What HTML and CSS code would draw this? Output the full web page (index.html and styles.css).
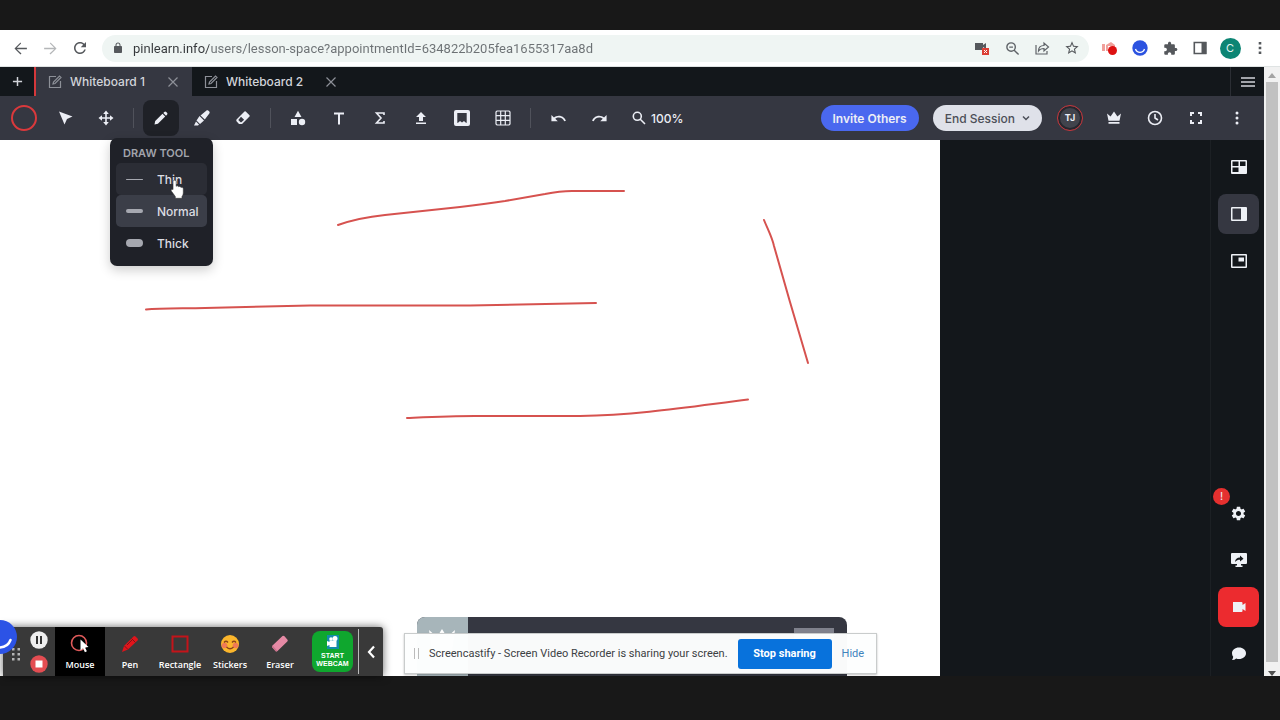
FILE: index.html
```html
<!DOCTYPE html>
<html lang="en">
<head>
	<meta charset="utf-8">
	<title>Lesson Space</title>
	<link rel="stylesheet" href="styles.css">
</head>
<body>

	<!-- Browser bar -->

	<header class="browser">
		<button class="nav" aria-label="Back"><svg width="17" height="17" viewBox="0 0 24 24"><path d="M21 11H6.800l6-6L12 3.600 3.500 12l8.500 8.400 1.400-1.400L6.800 13H21z"/></svg></button>
		<button class="nav faded" aria-label="Forward"><svg width="17" height="17" viewBox="0 0 24 24"><path d="M3 11h14.200l-6-6L12 3.600 20.500 12 12 20.400 10.600 19l6.600-6H3z"/></svg></button>
		<button class="nav" aria-label="Reload"><svg width="18" height="18" viewBox="0 0 24 24"><path d="M17.65 6.35C16.2 4.9 14.21 4 12 4c-4.42 0-7.99 3.58-7.99 8s3.57 8 7.99 8c3.73 0 6.84-2.55 7.73-6h-2.08c-.82 2.33-3.04 4-5.65 4-3.31 0-6-2.69-6-6s2.69-6 6-6c1.66 0 3.14.69 4.22 1.78L13 11h7V4l-2.35 2.35z"/></svg></button>
		<div class="omnibox">
			<svg width="12" height="12" viewBox="0 0 24 24"><path d="M18 8h-1V6c0-2.760-2.240-5-5-5S7 3.240 7 6v2H6c-1.100 0-2 .9-2 2v10c0 1.100.9 2 2 2h12c1.100 0 2-.9 2-2V10c0-1.100-.9-2-2-2zM9 8V6c0-1.660 1.340-3 3-3s3 1.340 3 3v2z"/></svg>
			<input class="url" type="text" aria-label="Address" value="pinlearn.info/users/lesson-space?appointmentId=634822b205fea1655317aa8d">
			<button class="nav" aria-label="Camera blocked"><svg width="16" height="16" viewBox="0 0 16 16"><path d="M1 3h8v2l3-2v6l-3-2v3H1z"/><path fill="#dc3f35" d="M8 8h7v7H8z"/><path fill="none" stroke="#fff" d="M10 10l3 3m0-3l-3 3"/></svg></button>
			<button class="nav" aria-label="Zoom"><svg width="15" height="15" viewBox="0 0 16 16"><path fill="none" stroke="#5f6368" stroke-width="1.500" d="M11 6.500a4.500 4.500 0 1 1-9 0a4.500 4.500 0 0 1 9 0zM9.800 9.800L14.500 14.500M4.500 6.500h4"/></svg></button>
			<button class="nav" aria-label="Share"><svg width="16" height="16" viewBox="0 0 16 16"><path fill="none" stroke="#5f6368" stroke-width="1.200" d="M2 5v9h11v-3M4.500 11c0-3.500 2-5.500 5.500-5.500V3l4.500 4-4.500 4V8.500C7 8.500 5.500 9.500 4.500 11z"/></svg></button>
			<button class="nav" aria-label="Bookmark"><svg width="16" height="16" viewBox="0 0 24 24"><path d="M22 9.240l-7.190-.62L12 2 9.190 8.630 2 9.240l5.460 4.730L5.820 21 12 17.270 18.180 21l-1.630-7.030L22 9.240zM12 15.400l-3.760 2.270 1-4.280-3.320-2.880 4.380-.38L12 6.100l1.710 4.040 4.380.38-3.320 2.880 1 4.280L12 15.400z"/></svg></button>
		</div>
		<button class="nav" aria-label="Screencastify"><svg width="18" height="18" viewBox="0 0 18 18"><path fill="#f0a09b" d="M1 5h3v7H1zM5 6l5-3 4 3v6H5z"/><path fill="#fff" d="M7 7h4v3H7z"/><circle cx="11.500" cy="11.500" r="4.500" fill="#dd1111"/></svg></button>
		<button class="nav" aria-label="Loom"><svg width="16" height="16" viewBox="0 0 16 16"><circle cx="8" cy="8" r="7.700" fill="#2c53e0"/><path fill="none" stroke="#fff" stroke-width="1.300" d="M3.500 9c1.500 4.500 7.500 4.500 9 0"/></svg></button>
		<button class="nav" aria-label="Extensions"><svg width="15" height="15" viewBox="0 0 24 24"><path d="M20.500 11H19V7c0-1.100-.9-2-2-2h-4V3.500C13 2.120 11.880 1 10.500 1S8 2.120 8 3.500V5H4c-1.100 0-1.990.9-1.990 2v3.800H3.500c1.490 0 2.700 1.210 2.700 2.700s-1.210 2.700-2.700 2.700H2V20c0 1.100.9 2 2 2h3.800v-1.500c0-1.490 1.210-2.700 2.700-2.700 1.490 0 2.700 1.210 2.700 2.700V22H17c1.100 0 2-.9 2-2v-4h1.500c1.380 0 2.500-1.120 2.500-2.500S21.880 11 20.500 11z"/></svg></button>
		<button class="nav" aria-label="Side panel"><svg width="14" height="14" viewBox="0 0 14 14"><path fill="none" stroke="#55585c" stroke-width="1.600" d="M1.300 1.500h11.400v11H1.300z"/><path d="M8.500 1h5v12h-5z"/></svg></button>
		<button class="nav" aria-label="Profile"><span class="profile">C</span></button>
		<button class="nav" aria-label="Menu"><svg width="16" height="16" viewBox="0 0 16 16"><path d="M6.700 2h2.600v2.600H6.700zM6.700 6.700h2.600v2.600H6.700zM6.700 11.400h2.600V14H6.700z"/></svg></button>
	</header>

	<div class="viewport">
		<main class="app">

			<!-- Whiteboard tabs -->

			<nav class="tabs">
				<button class="add" aria-label="Add tab"><svg width="11" height="11" viewBox="0 0 12 12"><path class="line" d="M6 1v10M1 6h10"/></svg></button>
				<div class="tab active">
					<svg width="14" height="14" viewBox="0 0 14 14"><path class="line thin" d="M8 1.500H1.500v11h11V6M5 9l.5-2L11.500 1l1.500 1.500-6 6z"/></svg>
					<a href="#board1">Whiteboard 1</a>
					<button class="close" aria-label="Close Whiteboard 1"><svg width="12" height="12" viewBox="0 0 12 12"><path class="line thin" d="M1.500 1.500l9 9m0-9l-9 9"/></svg></button>
				</div>
				<div class="tab">
					<svg width="14" height="14" viewBox="0 0 14 14"><path class="line thin" d="M8 1.500H1.500v11h11V6M5 9l.5-2L11.500 1l1.500 1.500-6 6z"/></svg>
					<a href="#board2">Whiteboard 2</a>
					<button class="close" aria-label="Close Whiteboard 2"><svg width="12" height="12" viewBox="0 0 12 12"><path class="line thin" d="M1.500 1.500l9 9m0-9l-9 9"/></svg></button>
				</div>
				<button class="list" aria-label="All tabs"><svg width="14" height="12" viewBox="0 0 14 12"><path class="line" d="M0 2h14M0 6h14M0 10h14"/></svg></button>
			</nav>

			<!-- Toolbar -->

			<div class="toolbar">
				<button class="tool" aria-label="Colour"><span class="ring"></span></button>
				<button class="tool" aria-label="Select"><svg width="16" height="16" viewBox="0 0 16 16"><path d="M2 1.500L15.500 6.500 10 9 7.500 14.500z"/></svg></button>
				<button class="tool" aria-label="Move"><svg width="16" height="16" viewBox="0 0 16 16"><path class="line" d="M8 3v10M3 8h10"/><path d="M8 .5L10.800 4H5.200zM8 15.500L5.200 12h5.600zM.5 8L4 5.200v5.600zM15.500 8L12 10.800V5.200z"/></svg></button>
				<span class="divider"></span>
				<div class="draw">
					<button class="tool on" aria-label="Draw"><svg width="16" height="16" viewBox="0 0 16 16"><path d="M1.500 14.500l.7-3.400 7.300-7.300 2.700 2.700-7.300 7.300zM10.300 3l1-1a1.300 1.300 0 0 1 1.900 0l.8.800a1.300 1.300 0 0 1 0 1.900l-1 1z"/></svg></button>
					<div class="menu">
						<h2>DRAW TOOL</h2>
						<button class="size hover"><span class="stroke one"></span>Thin</button>
						<button class="size picked"><span class="stroke two"></span>Normal</button>
						<button class="size"><span class="stroke three"></span>Thick</button>
						<svg class="hand" width="16" height="20" viewBox="0 0 16 20"><path fill="#fff" stroke="#333" stroke-width=".6" d="M4.500 1.200c1.100 0 1.700.6 1.700 1.600v4.500c.8-.8 2-.5 2.400.4 1-.6 2-.2 2.400.7 1.200-.4 2.300.2 2.300 1.500v3.600c0 2-.6 3.200-1.300 4v1.800H5.300v-1.800L1.500 12.300c-1-1.400.3-2.600 1.500-1.700V2.800c0-1 .6-1.600 1.500-1.600z"/></svg>
					</div>
				</div>
				<button class="tool" aria-label="Highlighter"><svg width="18" height="18" viewBox="0 0 18 18"><path d="M1 16.500l2-4 3 3-1 1zM3.500 11.500l3-4.500 4.500 4.500L7 15zM7.500 6.500l6-5c1.200-1 4 1.500 3 2.800L11.800 10.500z"/></svg></button>
				<button class="tool" aria-label="Eraser"><svg width="16" height="16" viewBox="0 0 16 16"><path fill-rule="evenodd" d="M9.500 1.500Q10 1 10.700 1.500L14.500 5.300Q15 6 14.500 6.500L7 14H4L1.500 11.200Q1 10.500 1.500 9.500zM6 6.800L3.300 9.900 5.600 12.300H6.400L9.100 9.700z"/></svg></button>
				<span class="divider"></span>
				<button class="tool" aria-label="Shapes"><svg width="16" height="16" viewBox="0 0 16 16"><path d="M8 .8L11.500 7h-7zM1 9h6v6H1z"/><circle cx="12" cy="12" r="3.200"/></svg></button>
				<button class="tool" aria-label="Text"><svg width="14" height="14" viewBox="0 0 14 14"><path d="M2 1.500h10v2H8v10H6v-10H2z"/></svg></button>
				<button class="tool" aria-label="Formula"><svg width="14" height="14" viewBox="0 0 14 14"><path class="line" d="M11 4V2H3.500L8 7l-4.500 5H11v-2"/></svg></button>
				<button class="tool" aria-label="Upload"><svg width="14" height="14" viewBox="0 0 14 14"><path d="M7 1l5 5H9v4H5V6H2zM2 11.500h10v1.500H2z"/></svg></button>
				<button class="tool" aria-label="Stickers"><svg width="16" height="16" viewBox="0 0 16 16"><path fill-rule="evenodd" d="M2 0h12a2 2 0 0 1 2 2v12a2 2 0 0 1-2 2H2a2 2 0 0 1-2-2V2a2 2 0 0 1 2-2zM3.300 3v10q1.500-.5 2.700-2l2 1.500 2-1.500q1.200 1.500 2.700 2V3z"/></svg></button>
				<button class="tool" aria-label="Grid"><svg width="16" height="16" viewBox="0 0 16 16"><path class="line thin" d="M2 1h12l1 1v12l-1 1H2l-1-1V2zM5.700 1v14M10.300 1v14M1 5.700h14M1 10.300h14"/></svg></button>
				<span class="divider"></span>
				<button class="tool" aria-label="Undo"><svg width="17" height="17" viewBox="0 0 24 24"><path d="M12.500 8c-2.650 0-5.050.99-6.900 2.600L2 7v9h9l-3.620-3.620c1.390-1.160 3.160-1.880 5.120-1.880 3.540 0 6.550 2.310 7.600 5.500l2.370-.78C21.080 11.030 17.150 8 12.500 8z"/></svg></button>
				<button class="tool" aria-label="Redo"><svg width="17" height="17" viewBox="0 0 24 24"><path d="M11.500 8c2.650 0 5.050.99 6.900 2.600L22 7v9h-9l3.620-3.620c-1.390-1.160-3.160-1.880-5.120-1.880-3.540 0-6.550 2.310-7.600 5.500l-2.370-.78C2.920 11.030 6.850 8 11.500 8z"/></svg></button>
				<button class="zoom"><svg width="14" height="14" viewBox="0 0 14 14"><path class="line" d="M9.300 5.300a4 4 0 1 1-8 0a4 4 0 0 1 8 0zM8.300 8.300L13 13"/></svg>100%</button>

				<button class="pill invite">Invite Others</button>
				<button class="pill end">End Session<svg width="8" height="6" viewBox="0 0 8 6"><path fill="none" stroke="#4c4f58" stroke-width="1.500" d="M1 1.500l3 3 3-3"/></svg></button>
				<span class="avatar">TJ</span>
				<button class="tool" aria-label="Leader"><svg width="14" height="14" viewBox="0 0 14 14"><path d="M0 2.500l3.600 3L7 .5l3.400 5 3.600-3L12.500 9.800h-11zM1.500 11h11v1.800h-11z"/></svg></button>
				<button class="tool" aria-label="Timer"><svg width="16" height="16" viewBox="0 0 16 16"><circle class="line" cx="8" cy="8" r="6.500"/><path class="line" d="M8 4v4l3 2"/></svg></button>
				<button class="tool" aria-label="Full screen"><svg width="12" height="12" viewBox="0 0 12 12"><path class="line wide" d="M1 4V1h3M8 1h3v3M11 8v3H8M4 11H1V8"/></svg></button>
				<button class="tool" aria-label="More"><svg width="4" height="14" viewBox="0 0 4 14"><circle cx="2" cy="2" r="1.500"/><circle cx="2" cy="7" r="1.500"/><circle cx="2" cy="12" r="1.500"/></svg></button>
			</div>

			<div class="stage">
				<section class="board">
					<svg class="ink" width="940" height="300" viewBox="0 0 940 300">
						<path d="M338 85C352 80 366 77 385 75L460 67Q485 64 505 61L545 54Q560 51 572 51H624"/>
						<path d="M146 169.500C160 168 180 168.500 205 168L310 165.500H470L596 163"/>
						<path d="M764 80C768 90 772 97 774 106L790 162 808 223"/>
						<path d="M407 278C430 277 450 276 475 276H580C640 275 695 266 748 259.500"/>
					</svg>
				</section>
				<aside class="people"></aside>
				<aside class="rail">
					<button aria-label="Grid view"><svg width="16" height="14" viewBox="0 0 16 14"><rect width="16" height="14" rx="1"/><path fill="#13171b" d="M1.500 1.500h6v4.500h-6zM9 1.500h5.500v4.500H9zM1.500 7.500h6v4.500h-6z"/></svg></button>
					<button class="on" aria-label="Sidebar view"><svg width="16" height="14" viewBox="0 0 16 14"><rect width="16" height="14" rx="1"/><path fill="#353741" d="M1.500 1.500H10v11H1.500z"/></svg></button>
					<button aria-label="Corner view"><svg width="16" height="14" viewBox="0 0 16 14"><rect width="16" height="14" rx="1"/><path fill="#13171b" d="M1.500 1.500h13v11h-13z"/><path d="M7.500 3.500H13v4H7.500z"/></svg></button>
					<button class="first" aria-label="Settings"><span class="alert">!</span><svg width="17" height="17" viewBox="0 0 24 24"><path d="M19.140 12.940c.04-.3.06-.61.06-.94 0-.32-.02-.64-.07-.94l2.030-1.580c.18-.14.23-.41.12-.61l-1.920-3.320c-.12-.22-.37-.29-.59-.22l-2.390.96c-.5-.38-1.030-.7-1.620-.94l-.36-2.540c-.04-.24-.24-.41-.48-.41h-3.840c-.24 0-.43.17-.47.41l-.36 2.540c-.59.24-1.130.57-1.620.94l-2.390-.96c-.22-.08-.47 0-.59.22L2.740 8.870c-.12.21-.08.47.12.61l2.030 1.580c-.05.3-.09.63-.09.94s.02.64.07.94l-2.030 1.580c-.18.14-.23.41-.12.61l1.920 3.320c.12.22.37.29.59.22l2.390-.96c.5.38 1.030.7 1.620.94l.36 2.540c.05.24.24.41.48.41h3.840c.24 0 .44-.17.47-.41l.36-2.540c.59-.24 1.130-.56 1.620-.94l2.390.96c.22.08.47 0 .59-.22l1.920-3.320c.12-.22.07-.47-.12-.61zM12 15.600c-1.980 0-3.600-1.620-3.600-3.600s1.620-3.600 3.600-3.600 3.600 1.620 3.600 3.600-1.620 3.600-3.600 3.600z"/></svg></button>
					<button aria-label="Share screen"><svg width="16" height="16" viewBox="0 0 16 16"><path d="M1 1h14a1 1 0 0 1 1 1v9a1 1 0 0 1-1 1h-5v1.500h1.500V15h-7v-1.500H6V12H1a1 1 0 0 1-1-1V2a1 1 0 0 1 1-1z"/><path fill="#13171b" d="M4 10c.3-3 2-4.500 5-4.500V3.500L12.500 6.700 9 9.500V7.800c-2 0-3.500.5-5 2.200z"/></svg></button>
					<button class="camera" aria-label="Camera"><svg width="14" height="12" viewBox="0 0 14 12"><path d="M1 1h8.500a1 1 0 0 1 1 1v2L13.500 2v8l-3-2v2a1 1 0 0 1-1 1H1z"/></svg></button>
					<button aria-label="Chat"><svg width="16" height="14" viewBox="0 0 16 14"><path d="M8 .5c4 0 7 2.500 7 5.700S12 12 8 12q-1.500 0-2.800-.5Q3.500 13 1 13q1-1.500 1.200-3.200Q1 8.300 1 6.200C1 3 4 .5 8 .5z"/></svg></button>
				</aside>
			</div>
		</main>

		<div class="scrollbar">
			<svg width="8" height="5" viewBox="0 0 8 5"><path fill="#a3a3a3" d="M4 0l4 5H0z"/></svg>
			<span class="thumb"></span>
			<svg width="8" height="5" viewBox="0 0 8 5"><path fill="#505050" d="M0 0h8L4 5z"/></svg>
		</div>

		<!-- Panels floating over the page -->

		<div class="notice">
			<div class="crown"><svg width="26" height="22" viewBox="0 0 26 22"><path fill="#fff" d="M0 1l8 7 5-8 5 8 8-7-3 20H3z"/></svg></div>
			<span class="chip"></span>
		</div>

		<div class="recorder">
			<svg class="grip" width="8" height="13" viewBox="0 0 8 13"><path d="M0 0h2.500v2.500H0zM5.500 0H8v2.500H5.500zM0 5h2.500v2.500H0zM5.500 5H8v2.500H5.500zM0 10h2.500v2.500H0zM5.500 10H8v2.500H5.500z"/></svg>
			<div class="controls">
				<button aria-label="Pause"><svg width="18" height="18" viewBox="0 0 18 18"><circle cx="9" cy="9" r="8.700" fill="#eee"/><path fill="#333" d="M6 5h2v8H6zM10 5h2v8h-2z"/></svg></button>
				<button aria-label="Stop"><svg width="18" height="18" viewBox="0 0 18 18"><circle cx="9" cy="9" r="8.700" fill="#e34d52"/><path fill="#fff" d="M5.500 5.500h7v7h-7z"/></svg></button>
			</div>
			<button class="item current"><svg width="20" height="20" viewBox="0 0 20 20"><circle cx="9" cy="9" r="7.500" fill="none" stroke="#e05a5a" stroke-width="1.600"/><path fill="#fff" d="M10.500 5.500v11l2.600-2.300 1.800 4 2-.9-1.900-3.900 3.500-.3z"/></svg>Mouse</button>
			<button class="item"><svg width="20" height="20" viewBox="0 0 20 20"><path fill="#e0141b" d="M2 18l2-6L13.500 2.500q1-1 2 0l2 2q1 1 0 2L8 15.500z"/><path fill="none" stroke="#7c1518" d="M11.500 4.500l4 4M4.500 12l3.500 3.500M7 11l5-5"/></svg>Pen</button>
			<button class="item"><svg width="20" height="20" viewBox="0 0 20 20"><path fill="none" stroke="#c4141a" stroke-width="2" d="M2.500 2.500h15v15h-15z"/></svg>Rectangle</button>
			<button class="item"><svg width="20" height="20" viewBox="0 0 20 20"><circle cx="10" cy="10" r="9" fill="#fbb62c"/><circle cx="4.500" cy="11.500" r="2.800" fill="#f07a55"/><circle cx="15.500" cy="11.500" r="2.800" fill="#f07a55"/><path fill="none" stroke="#8a431c" stroke-width="1.300" d="M4 8.500q2-2.500 4 0M12 8.500q2-2.500 4 0M6.500 13q3.500 3.500 7 0"/></svg>Stickers</button>
			<button class="item"><svg width="20" height="20" viewBox="0 0 20 20"><path fill="#e58aa5" d="M2.500 11.500L12.500 2q1-.7 2 .2l3 3.500q.7 1-.2 1.800L7.500 17q-1.500 1-2.500-.5L2.300 13.500q-.7-1 .2-2z"/><path fill="#c9708b" d="M2.500 11.500l5 5.500q-1.500 1-2.500-.5l-2.700-3q-.7-1 .2-2z"/></svg>Eraser</button>
			<button class="webcam"><svg width="14" height="14" viewBox="0 0 14 14"><path fill="#148ca8" d="M1 0h12v14H1z"/><path fill="#fff" d="M1 6l2.500 1V5.500h7V12h-7v-2L1 11z"/><circle cx="5" cy="4" r="1.800" fill="#fff"/><circle cx="9" cy="3.500" r="2.500" fill="#fff"/></svg><span>START</span><span>WEBCAM</span></button>
			<button class="fold" aria-label="Collapse"><svg width="8" height="14" viewBox="0 0 8 14"><path fill="none" stroke="#fff" stroke-width="2.200" d="M7 1.500L2 7l5 5.500"/></svg></button>
		</div>

		<svg class="loom" width="18" height="36" viewBox="0 0 18 36"><circle cx="0" cy="18" r="17" fill="#2c53e6"/><path fill="none" stroke="#fff" stroke-width="2.500" stroke-linecap="round" d="M0 28.500Q8 28 10.500 21"/></svg>

		<div class="sharing">
			<span class="handle"></span>
			<p>Screencastify - Screen Video Recorder is sharing your screen.</p>
			<button>Stop sharing</button>
			<a href="#hide">Hide</a>
		</div>
	</div>

</body>
</html>
```
FILE: styles.css
```css
* { box-sizing: border-box; }
html, body { height: 100%; margin: 0; }
body { display: flex; flex-direction: column; padding: 30px 0 44px; background: #181818; font-family: Inter, "Liberation Sans", sans-serif; overflow: hidden; }
button { display: flex; align-items: center; justify-content: center; flex: none; margin: 0; padding: 0; border: 0; background: none; color: inherit; font: inherit; white-space: nowrap; }
a { color: inherit; text-decoration: none; }
svg { display: block; flex: none; fill: currentColor; }
.line { fill: none; stroke: currentColor; stroke-width: 1.6; }
.thin { stroke-width: 1.2; }
.wide { stroke-width: 2; }

/* Browser bar */

.browser { display: flex; align-items: center; flex: none; height: 37px; padding: 0 5px; background: #fff; color: #55585c; border-bottom: 1px solid #dfe3e3; }
.nav { width: 30px; height: 26px; }
.faded { color: #b4b6b8; }
.omnibox { display: flex; align-items: center; flex: 1; height: 27px; margin: 0 6px 0 7px; padding: 0 2px 0 10px; border-radius: 14px; background: #eff5f3; }
.url { flex: 1; min-width: 0; margin-left: 9px; padding: 1px 0 0; border: 0; outline: 0; font: 13px/20px Roboto, sans-serif; color: transparent; background: linear-gradient(90deg, #35383b 76px, #6c7174 76px); -webkit-background-clip: text; background-clip: text; }
.profile { width: 21px; height: 21px; border-radius: 50%; background: #0d8574; color: #e6f4f1; font-size: 11px; line-height: 21px; }

/* Page */

.viewport { position: relative; display: flex; flex: 1; min-height: 0; }
.app { display: flex; flex-direction: column; flex: 1; min-width: 0; background: #13171b; }
.scrollbar { display: flex; flex-direction: column; align-items: center; justify-content: space-between; width: 16px; padding: 6px 0 0; background: #f1f1f1; }
.thumb { flex: 1; width: 12px; margin: 4px 0 9px; background: #c1c1c1; }

/* Tabs */

.tabs { display: flex; flex: none; height: 29px; color: #d2d4da; font-size: 12px; font-weight: 500; }
.add { width: 34px; }
.tab { display: flex; align-items: center; padding: 0 13px 0 12px; }
.tab > svg, .close { color: #8d9098; }
.tab a { margin: 0 22px 0 8px; white-space: nowrap; }
.tab.active { border-left: 2px solid #d5383b; background: #353741; }
.list { width: 34px; margin-left: auto; border-left: 1px solid #2b2e34; }

/* Toolbar */

.toolbar { display: flex; align-items: center; gap: 5px; flex: none; height: 44px; padding: 0 9px 0 6px; background: #353741; color: #eceef5; }
.tool { width: 36px; height: 36px; border-radius: 8px; }
.tool.on { background: #1f2127; }
.ring { width: 26px; height: 26px; border: 2px solid #da393c; border-radius: 50%; }
.divider { width: 1px; height: 20px; margin: 0 4px; background: #50525b; }
.zoom { gap: 5px; margin-left: 10px; font-size: 12px; font-weight: 500; }
.pill { height: 26px; padding: 0 12px; border-radius: 13px; font-size: 12px; font-weight: 500; }
.pill svg { margin-left: 7px; }
.invite { margin-left: auto; background: #4a68ef; font-weight: 600; }
.end { margin-left: 9px; background: #dfe1e9; color: #4c4f58; }
.avatar { width: 26px; height: 26px; margin: 0 8px 0 10px; border: 1px solid #c9353a; border-radius: 50%; box-shadow: inset 0 0 0 2px #25272e; background: #41434c; font-size: 9px; font-weight: 700; line-height: 24px; text-align: center; }

/* Draw menu */

.draw { position: relative; }
.menu { position: absolute; z-index: 2; top: 38px; left: -33px; width: 103px; padding: 7px 6px; border-radius: 7px; background: #1f2128; box-shadow: 0 4px 12px rgba(0, 0, 0, .2); }
.menu h2 { margin: 0 0 2px 7px; color: #a2a4ac; font-size: 11px; font-weight: 600; line-height: 16px; white-space: nowrap; }
.size { justify-content: flex-start; width: 100%; height: 32px; padding-left: 10px; border-radius: 5px; color: #dcdde3; font-size: 12px; font-weight: 500; }
.hover { background: #2b2d35; }
.picked { background: #3b3e48; }
.stroke { width: 17px; margin-right: 14px; border-radius: 4px; background: #a6a8b0; }
.one { height: 1px; }
.two { height: 4px; }
.three { height: 8px; }
.hand { position: absolute; top: 41px; left: 60px; }

/* Board */

.stage { display: flex; flex: 1; min-height: 0; }
.board { position: relative; flex: 1; overflow: hidden; background: #fff; }
.ink { position: absolute; top: 0; left: 0; fill: none; stroke: #d6524f; stroke-width: 2; stroke-linecap: round; }
.people { width: 270px; }
.rail { display: flex; flex-direction: column; align-items: center; gap: 7px; width: 54px; padding: 7px 0 2px 2px; border-left: 1px solid #1c2024; color: #eef1f6; }
.rail button { position: relative; width: 41px; height: 40px; border-radius: 8px; }
.rail .first { margin-top: auto; }
.rail .on { background: #353741; }
.rail .camera { background: #ec2b2f; }
.alert { position: absolute; top: -5px; left: -5px; width: 17px; height: 17px; border-radius: 50%; background: #e5302f; font-size: 11px; line-height: 17px; }

/* Floating panels */

.notice { position: absolute; bottom: 0; left: 417px; display: flex; justify-content: space-between; width: 430px; height: 59px; padding-right: 13px; border-radius: 8px 8px 0 0; background: #353741; overflow: hidden; }
.crown { width: 51px; padding: 12px; background: #a7b5ba; }
.chip { width: 40px; height: 30px; margin-top: 11px; background: #7f818c; }

.recorder { position: absolute; bottom: 0; left: 3px; display: flex; align-items: center; height: 49px; background: #393939; color: #fff; border-radius: 0 3px 0 0; box-shadow: 0 0 8px rgba(0, 0, 0, .6); font: 600 9px/12px "Open Sans", sans-serif; }
.grip { margin: 6px 10px 0 9px; color: #b5b5b5; }
.controls { display: flex; flex-direction: column; gap: 6px; width: 18px; }
.item { flex-direction: column; gap: 5px; width: 50px; height: 49px; padding-top: 1px; }
.current { margin-left: 7px; background: #000; }
.recorder .webcam { flex-direction: column; width: 41px; height: 41px; margin: 0 5px 0 7px; border-radius: 8px; background: #0fa72e; font: 700 7px/8px "Liberation Sans", sans-serif; }
.webcam svg { margin-bottom: 3px; }
.fold { width: 25px; height: 45px; border-left: 1px solid #bbb; }

.loom { position: absolute; bottom: 21px; left: 0; }

.sharing { position: absolute; bottom: 2px; left: 404px; display: flex; align-items: center; width: 473px; height: 41px; padding: 0 9px; border: 1px solid #c9cccc; background: rgba(253, 254, 254, .98); box-shadow: 0 1px 2px rgba(0, 0, 0, .25); color: #3c4043; font: 11px/16px Roboto, sans-serif; }
.handle { flex: none; width: 5px; height: 11px; margin-right: 10px; border: solid #bbb; border-width: 0 1px; }
.sharing p { margin: 0; white-space: nowrap; }
.sharing button { width: 94px; height: 30px; margin: 0 10px; border-radius: 3px; background: #0872dc; color: #fff; font-weight: 700; }
.sharing a { color: #3f83bd; }
```
